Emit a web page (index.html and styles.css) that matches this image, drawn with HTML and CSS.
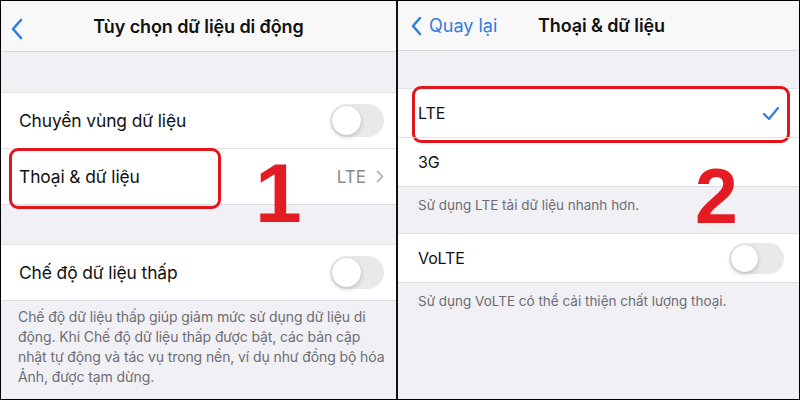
FILE: index.html
```html
<!DOCTYPE html>
<html lang="vi">
<head>
<meta charset="UTF-8" />
<meta name="viewport" content="width=device-width, initial-scale=1" />
<title>Tùy chọn dữ liệu di động</title>
<link rel="stylesheet" href="styles.css">
</head>
<body>

<div class="frame">

  <!-- màn hình 1 -->
  <div class="screen left">
    <div class="navbar">
      <svg class="back" width="14" height="22" viewBox="0 0 14 22"><polyline points="11,2 3,11 11,20" fill="none" stroke="#2f7de1" stroke-width="2.6" stroke-linecap="round" stroke-linejoin="round"/></svg>
      <div class="title">Tùy chọn dữ liệu di động</div>
    </div>

    <div class="gap"></div>
    <div class="group">
      <div class="row">
        <span class="label">Chuyển vùng dữ liệu</span>
        <span class="switch"><span class="knob"></span></span>
      </div>
      <div class="row">
        <span class="label">Thoại &amp; dữ liệu</span>
        <span class="detail">LTE
          <svg width="8" height="13" viewBox="0 0 8 13"><polyline points="1.5,1.5 6.5,6.5 1.5,11.5" fill="none" stroke="#b8b8bc" stroke-width="1.8" stroke-linecap="round" stroke-linejoin="round"/></svg>
        </span>
        <div class="mark mark-1"></div>
      </div>
    </div>

    <div class="gap gap-2"></div>
    <div class="group">
      <div class="row">
        <span class="label">Chế độ dữ liệu thấp</span>
        <span class="switch"><span class="knob"></span></span>
      </div>
    </div>
    <p class="footer">Chế độ dữ liệu thấp giúp giảm mức sử dụng dữ liệu di động. Khi Chế độ dữ liệu thấp được bật, các bản cập nhật tự động và tác vụ trong nền, ví dụ như đồng bộ hóa Ảnh, được tạm dừng.</p>
  </div>

  <div class="divider"></div>

  <!-- màn hình 2 -->
  <div class="screen right">
    <div class="navbar">
      <span class="back-link">
        <svg width="13" height="20" viewBox="0 0 13 20"><polyline points="10,2 3,10 10,18" fill="none" stroke="#2f7de1" stroke-width="2.5" stroke-linecap="round" stroke-linejoin="round"/></svg>
        Quay lại
      </span>
      <div class="title">Thoại &amp; dữ liệu</div>
    </div>

    <div class="gap"></div>
    <div class="group">
      <div class="row">
        <span class="label">LTE</span>
        <svg class="check" width="18" height="15" viewBox="0 0 18 15"><polyline points="2,8 7,13 16,2" fill="none" stroke="#2f7de1" stroke-width="2.2" stroke-linecap="round" stroke-linejoin="round"/></svg>
        <div class="mark mark-2"></div>
      </div>
      <div class="row">
        <span class="label">3G</span>
      </div>
    </div>
    <p class="footer">Sử dụng LTE tải dữ liệu nhanh hơn.</p>

    <div class="group">
      <div class="row">
        <span class="label">VoLTE</span>
        <span class="switch"><span class="knob"></span></span>
      </div>
    </div>
    <p class="footer">Sử dụng VoLTE có thể cải thiện chất lượng thoại.</p>
  </div>

  <!-- số thứ tự bước -->
  <div class="step step-1">1</div>
  <div class="step step-2">2</div>
</div>

</body>
</html>
```

FILE: styles.css
```css
body {
  margin: 0;
  background: #fff;
  font-family: 'Inter', 'Noto Sans', sans-serif;
  color: #111;
}
.frame {
  position: relative;
  display: flex;
  width: 800px;
  height: 400px;
  box-sizing: border-box;
  border: 1px solid #000;
  overflow: hidden;
}
.screen {
  display: flex;
  flex-direction: column;
  background: #f0f0f5;
}
.screen.left {
  width: 395px;
}
.screen.right {
  flex: 1;
}
.divider {
  width: 2px;
  background: #111;
}

/* thanh điều hướng */
.navbar {
  position: relative;
  display: flex;
  align-items: center;
  justify-content: center;
  height: 51px;
  box-sizing: border-box;
  background: #f8f8f9;
  border-bottom: 1px solid #d6d6da;
}
.navbar .title {
  font-size: 18px;
  font-weight: 600;
  letter-spacing: -0.1px;
}
.left .navbar .back {
  position: absolute;
  left: 9px;
  top: 17px;
}
.right .navbar {
  height: 50px;
}
.right .navbar .title {
  margin-left: 6px;
}
.back-link {
  position: absolute;
  left: 12px;
  top: 14px;
  display: flex;
  align-items: center;
  gap: 6px;
  color: #2f7de1;
  font-size: 18px;
}

.gap {
  height: 40px;
}
.gap-2 {
  height: 39px;
}
.right .gap {
  height: 37px;
}

/* nhóm các dòng */
.group {
  background: #fff;
  border-top: 1px solid #e2e2e6;
  border-bottom: 1px solid #dcdce0;
}
.row {
  position: relative;
  display: flex;
  align-items: center;
  justify-content: space-between;
  height: 55px;
  padding: 0 12px 0 18px;
}
.row + .row {
  border-top: 1px solid #e2e2e6;
}
.label {
  font-size: 17.4px;
  letter-spacing: -0.1px;
}
.detail {
  display: flex;
  align-items: center;
  gap: 10px;
  color: #8a8a8e;
  font-size: 17px;
}
.right .row {
  height: 48px;
  padding: 0 15px 0 20px;
}
.right .label {
  font-size: 16px;
}
.right .check {
  margin-right: 4px;
}

/* công tắc */
.switch {
  position: relative;
  width: 54px;
  height: 33px;
  border-radius: 17px;
  background: #e9e9eb;
}
.knob {
  position: absolute;
  left: 2px;
  top: 2px;
  width: 29px;
  height: 29px;
  border-radius: 50%;
  background: #fff;
  box-shadow: 0 2px 5px rgba(0, 0, 0, 0.18), 0 0 1px rgba(0, 0, 0, 0.15);
}
.right .switch {
  width: 55px;
  height: 31px;
}
.right .knob {
  width: 27px;
  height: 27px;
}

.footer {
  margin: 0;
  padding: 6px 6px 0 17px;
  font-size: 14px;
  line-height: 20px;
  letter-spacing: -0.1px;
  color: #6d6d72;
}
.right .footer {
  padding: 8px 16px 18px 20px;
  font-size: 13.5px;
  letter-spacing: 0;
}

/* khung đỏ đánh dấu */
.mark {
  position: absolute;
  border: 3px solid #e3151c;
  border-radius: 9px;
  box-sizing: border-box;
}
.mark-1 {
  left: 8px;
  top: -1px;
  width: 212px;
  height: 61px;
}
.mark-2 {
  left: 14px;
  top: -3px;
  width: 378px;
  height: 57px;
}

.step {
  position: absolute;
  font-family: 'Liberation Sans', Arial, sans-serif;
  font-weight: bold;
  line-height: 1;
  color: #e31b23;
}
.step-1 {
  left: 254px;
  top: 150px;
  font-size: 84px;
}
.step-2 {
  left: 694px;
  top: 157px;
  font-size: 77px;
}
```
